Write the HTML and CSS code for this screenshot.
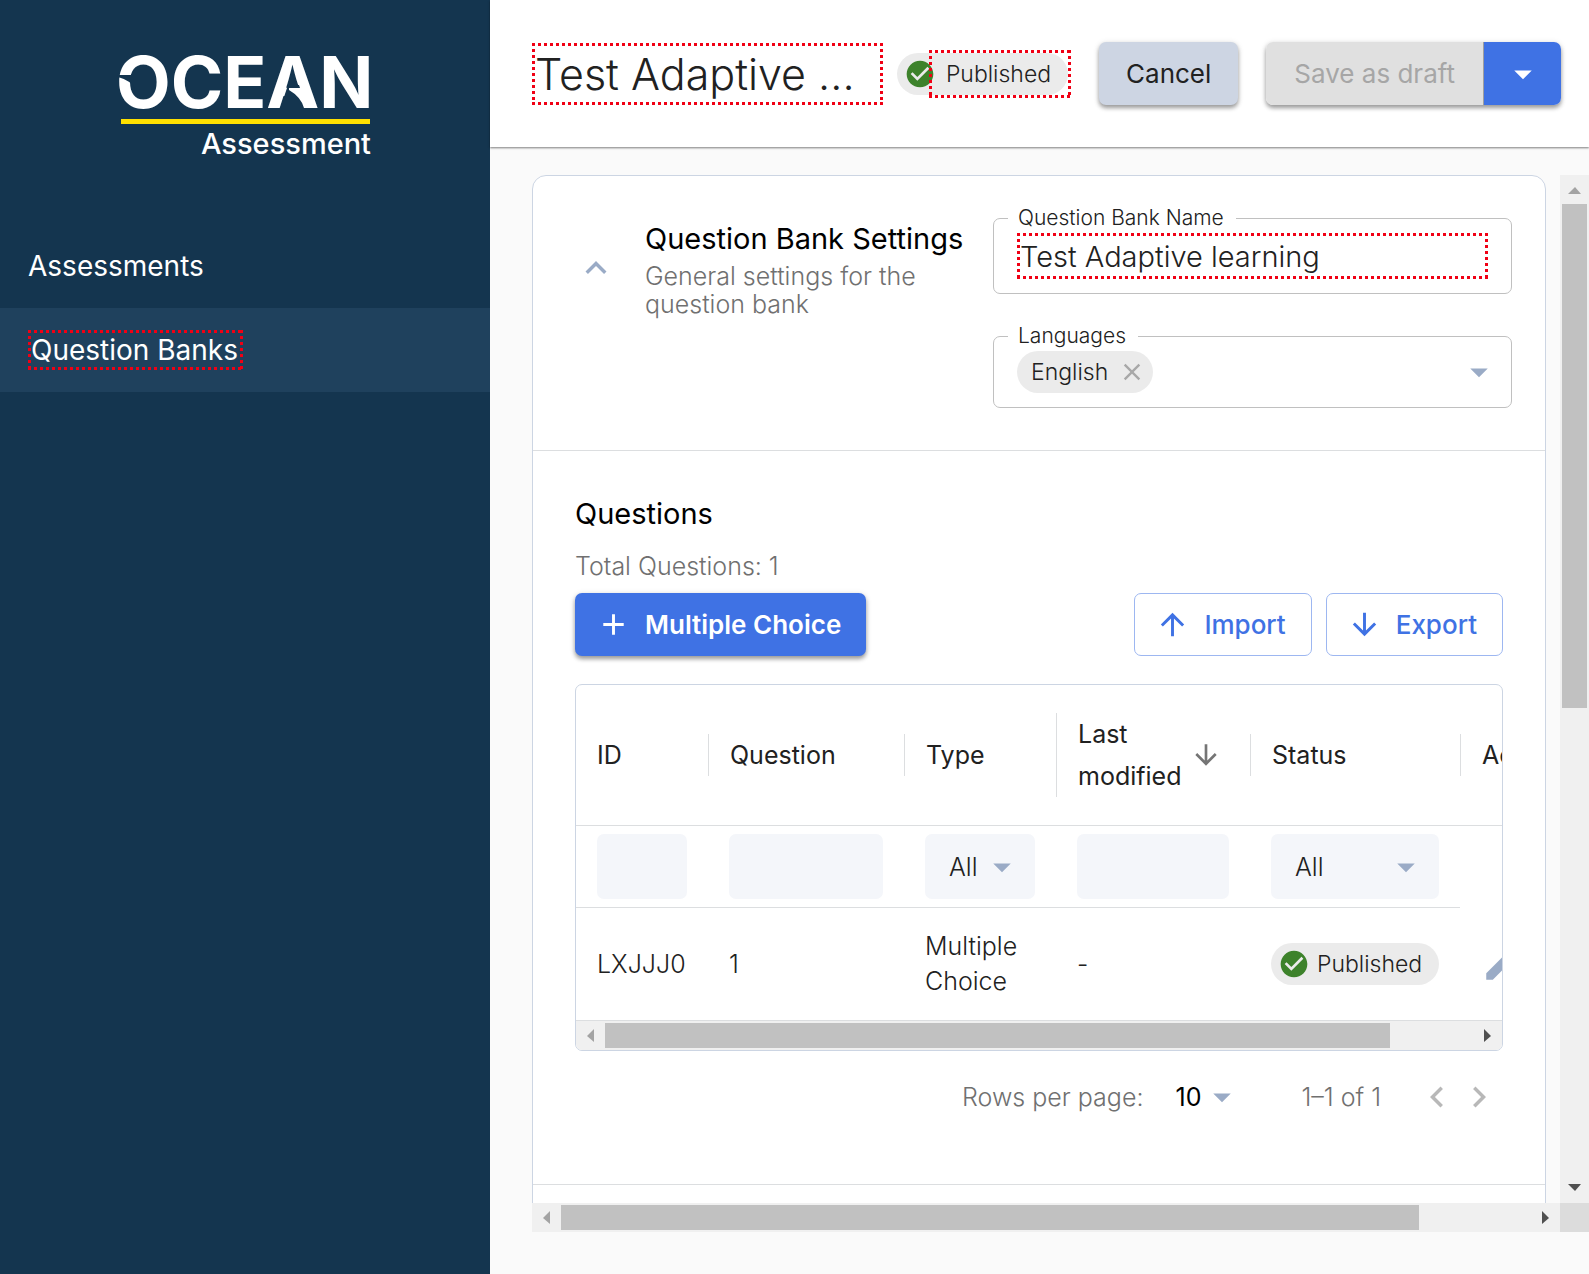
FILE: index.html
```html
<!DOCTYPE html>
<html lang="en">
<head>
<meta charset="utf-8">
<meta name="viewport" content="width=device-width, initial-scale=1">
<title>Question Bank – Ocean Assessment</title>
<link rel="stylesheet" href="styles.css">
</head>
<body>
<svg class="sprite" aria-hidden="true">
  <symbol id="caret" viewBox="0 0 24 24"><path d="M7 10l5 5 5-5z"/></symbol>
  <symbol id="check" viewBox="0 0 24 24"><path d="M12 2C6.500 2 2 6.500 2 12s4.500 10 10 10 10-4.500 10-10S17.500 2 12 2zm-2 15l-5-5 1.400-1.400L10 14.200l7.600-7.600L19 8l-9 9z"/></symbol>
  <symbol id="down" viewBox="0 0 24 24"><path d="M20 12l-1.410-1.410L13 16.170V4h-2v12.170l-5.580-5.590L4 12l8 8 8-8z"/></symbol>
  <symbol id="up" viewBox="0 0 24 24"><path d="M4 12l1.410 1.410L11 7.830V20h2V7.830l5.580 5.590L20 12l-8-8-8 8z"/></symbol>
  <symbol id="plus" viewBox="0 0 24 24"><path d="M19 13h-6v6h-2v-6H5v-2h6V5h2v6h6v2z"/></symbol>
  <symbol id="less" viewBox="0 0 24 24"><path d="M12 8l-6 6 1.410 1.410L12 10.830l4.590 4.580L18 14z"/></symbol>
  <symbol id="prev" viewBox="0 0 24 24"><path d="M15.410 7.410L14 6l-6 6 6 6 1.410-1.410L10.830 12z"/></symbol>
  <symbol id="next" viewBox="0 0 24 24"><path d="M10 6L8.590 7.410 13.170 12l-4.580 4.590L10 18l6-6z"/></symbol>
  <symbol id="close" viewBox="0 0 24 24"><path d="M19 6.410L17.590 5 12 10.590 6.410 5 5 6.410 10.590 12 5 17.590 6.410 19 12 13.410 17.590 19 19 17.590 13.410 12z"/></symbol>
  <symbol id="edit" viewBox="0 0 24 24"><path d="M3 17.250V21h3.750L17.810 9.940l-3.750-3.750L3 17.250zM20.710 7.040a1 1 0 0 0 0-1.410l-2.340-2.340a1 1 0 0 0-1.410 0l-1.830 1.830 3.750 3.750 1.830-1.830z"/></symbol>
</svg>

<div class="app">
  <aside class="sidebar">
    <a class="brand" href="#" aria-label="Ocean Assessment">
      <svg class="logo" viewBox="0 0 256 104" role="img">
        <text class="logo-name" x="-1" y="54">OCEAN</text>
        <path class="logo-cut" d="M0 21H18V36Q16 27 1 23Z"/>
        <path class="logo-cut" d="M171 31H182L187 46H166Z"/>
        <path class="logo-fill" d="M172 34H184L191 54H187Q184 43 172 36Z"/>
        <rect class="logo-bar" x="4" y="65" width="249" height="5"/>
        <text class="logo-sub" x="254" y="100" text-anchor="end">Assessment</text>
      </svg>
    </a>
    <nav class="nav">
      <a class="nav-item" href="#">Assessments</a>
      <a class="nav-item active" href="#"><span class="marked">Question Banks</span></a>
    </nav>
  </aside>

  <div class="main">
    <header class="topbar">
      <h1 class="title marked">Test Adaptive ...</h1>
      <span class="chip status-chip"><svg class="chip-icon"><use href="#check"/></svg><span class="chip-text marked">Published</span></span>
      <button class="btn btn-grey" type="button">Cancel</button>
      <div class="btn-group">
        <button class="btn btn-disabled" type="button" disabled>Save as draft</button>
        <button class="btn btn-blue btn-caret" type="button" aria-label="More save options"><svg class="icon-lg"><use href="#caret"/></svg></button>
      </div>
    </header>

    <main class="scroller">
      <div class="viewport">
        <div class="card">
          <section class="settings">
            <button class="icon-btn collapse" type="button" aria-label="Collapse"><svg class="icon-lg"><use href="#less"/></svg></button>
            <div class="settings-text">
              <h2 class="heading">Question Bank Settings</h2>
              <p class="sub">General settings for the question bank</p>
            </div>
            <div class="fields">
              <fieldset class="field">
                <legend><label for="bank-name">Question Bank Name</label></legend>
                <input class="name-input marked" id="bank-name" type="text" value="Test Adaptive learning">
              </fieldset>
              <fieldset class="field">
                <legend>Languages</legend>
                <div class="lang-row">
                  <span class="chip lang-chip">English<button class="icon-btn remove" type="button" aria-label="Remove English"><svg class="icon-sm"><use href="#close"/></svg></button></span>
                  <button class="icon-btn open" type="button" aria-label="Open languages"><svg class="icon-lg"><use href="#caret"/></svg></button>
                </div>
              </fieldset>
            </div>
          </section>

          <section class="questions">
            <h2 class="heading">Questions</h2>
            <p class="total">Total Questions: 1</p>
            <div class="toolbar">
              <button class="btn btn-blue btn-add" type="button"><svg class="icon"><use href="#plus"/></svg>Multiple Choice</button>
              <button class="btn btn-outline" type="button"><svg class="icon"><use href="#up"/></svg>Import</button>
              <button class="btn btn-outline" type="button"><svg class="icon"><use href="#down"/></svg>Export</button>
            </div>

            <div class="table-box">
              <div class="table-clip">
                <table class="grid">
                  <colgroup><col class="c-id"><col class="c-question"><col class="c-type"><col class="c-date"><col class="c-status"><col class="c-actions"></colgroup>
                  <thead>
                    <tr class="head-row">
                      <th scope="col"><span class="th">ID</span></th>
                      <th scope="col"><span class="th">Question</span></th>
                      <th scope="col"><span class="th">Type</span></th>
                      <th scope="col"><span class="th">Last modified<svg class="icon-sort"><use href="#down"/></svg></span></th>
                      <th scope="col"><span class="th">Status</span></th>
                      <th scope="col"><span class="th">Actions</span></th>
                    </tr>
                  </thead>
                  <tbody>
                    <tr class="filter-row">
                      <td><input class="filter" type="text" aria-label="Filter by ID"></td>
                      <td><input class="filter" type="text" aria-label="Filter by question"></td>
                      <td><span class="select"><select class="filter" aria-label="Filter by type"><option>All</option></select><svg class="icon-lg"><use href="#caret"/></svg></span></td>
                      <td><input class="filter" type="text" aria-label="Filter by last modified"></td>
                      <td><span class="select"><select class="filter" aria-label="Filter by status"><option>All</option></select><svg class="icon-lg"><use href="#caret"/></svg></span></td>
                      <td class="blank"></td>
                    </tr>
                    <tr class="data-row">
                      <td>LXJJJ0</td>
                      <td>1</td>
                      <td>Multiple Choice</td>
                      <td>-</td>
                      <td><span class="chip"><svg class="chip-icon"><use href="#check"/></svg><span class="chip-text">Published</span></span></td>
                      <td><button class="icon-btn" type="button" aria-label="Edit"><svg class="icon-lg"><use href="#edit"/></svg></button></td>
                    </tr>
                  </tbody>
                </table>
              </div>
              <div class="bar bar-x" aria-hidden="true"><i class="arrow left"></i><div class="track"><div class="thumb thumb-table"></div></div><i class="arrow right"></i></div>
            </div>

            <div class="pager">
              <label for="rows">Rows per page:</label>
              <span class="select rows"><select id="rows"><option>10</option></select><svg class="icon-lg"><use href="#caret"/></svg></span>
              <span class="range">1–1 of 1</span>
              <button class="icon-btn step" type="button" aria-label="Previous page" disabled><svg class="icon-lg"><use href="#prev"/></svg></button>
              <button class="icon-btn step" type="button" aria-label="Next page" disabled><svg class="icon-lg"><use href="#next"/></svg></button>
            </div>
          </section>
          <section class="next-section"></section>
        </div>
      </div>
      <div class="bar bar-y" aria-hidden="true"><i class="arrow top"></i><div class="track"><div class="thumb thumb-y"></div></div><i class="arrow bottom"></i></div>
      <div class="bar bar-x" aria-hidden="true"><i class="arrow left"></i><div class="track"><div class="thumb thumb-x"></div></div><i class="arrow right"></i></div>
      <div class="corner"></div>
    </main>
  </div>
</div>
</body>
</html>
```

FILE: styles.css
```css
:root {
  --navy: #14354f;
  --blue: #3f72e4;
  --ink: #212121;
  --muted: #707070;
  --slate: #9aabc6;
  --line: #dcdee0;
  --frame: #ccd5e3;
}

* { box-sizing: border-box; }

body {
  margin: 0;
  font-family: Inter, "Liberation Sans", sans-serif;
  font-size: 25px;
  font-weight: 300;
  color: var(--ink);
  background: #fafafa;
}

h1, h2, p { margin: 0; font-weight: inherit; }
button, input, select { font: inherit; color: inherit; margin: 0; }
button { cursor: pointer; border: 0; background: none; padding: 0; }
svg { display: block; fill: currentColor; flex: none; }

.sprite { display: none; }
.icon { width: 35px; height: 35px; }
.icon-lg { width: 42px; height: 42px; }
.icon-sm { width: 28px; height: 28px; }
.icon-sort { width: 32px; height: 32px; color: #757575; }
.icon-btn { display: flex; align-items: center; justify-content: center; color: var(--slate); }

/* square-dotted red frame */
.marked {
  --dots: #f00014 0 3px, transparent 3px 6px;
  background:
    repeating-linear-gradient(90deg, var(--dots)) top / 100% 3px no-repeat,
    repeating-linear-gradient(90deg, var(--dots)) bottom / 100% 3px no-repeat,
    repeating-linear-gradient(var(--dots)) left / 3px 100% no-repeat,
    repeating-linear-gradient(var(--dots)) right / 3px 100% no-repeat;
}

.app { display: flex; height: 100vh; overflow: hidden; }

/* sidebar */
.sidebar { flex: none; width: 490px; background: var(--navy); color: #fff; }
.brand { display: flex; justify-content: center; height: 224px; padding-top: 54px; color: #fff; }
.logo { width: 256px; height: 104px; overflow: visible; }
.logo-name { font-size: 71px; font-weight: 700; }
.logo-sub { font-size: 29px; font-weight: 500; }
.logo-cut { fill: var(--navy); }
.logo-bar { fill: #ffe000; }
.nav-item {
  display: flex;
  align-items: center;
  height: 84px;
  padding: 0 28px;
  font-size: 28px;
  font-weight: 400;
  color: #fff;
  text-decoration: none;
}
.nav-item.active { background: #1f415d; }
.nav-item .marked { padding: 0 5px 0 3px; line-height: 40px; }

/* top bar */
.main { flex: 1; min-width: 0; display: flex; flex-direction: column; }
.topbar {
  flex: none;
  display: flex;
  align-items: center;
  height: 147px;
  padding: 0 28px 0 42px;
  background: #fff;
  box-shadow: 0 1px 2px rgba(0, 0, 0, .5);
}
.title {
  flex: 1;
  min-width: 0;
  margin-right: 14px;
  padding: 0 3px;
  font-size: 43px;
  line-height: 62px;
  white-space: nowrap;
  overflow: hidden;
}
.chip {
  display: inline-flex;
  align-items: center;
  height: 42px;
  border-radius: 21px;
  background: #ebebeb;
  font-size: 23px;
  vertical-align: middle;
}
.chip-icon { width: 32px; height: 32px; margin-left: 7px; color: #3d822b; }
.chip-text { padding: 0 17px 0 7px; line-height: 42px; }
.status-chip { margin-right: 31px; }
.status-chip .chip-icon { margin-right: -7px; }
.status-chip .chip-text { margin-right: -3px; padding: 0 20px 0 17px; line-height: 48px; }

.btn {
  display: flex;
  align-items: center;
  justify-content: center;
  height: 63px;
  padding: 0 28px;
  border-radius: 7px;
  font-size: 26px;
  font-weight: 400;
  white-space: nowrap;
}
.btn-grey, .btn-group, .btn-add { box-shadow: 0 3px 4px rgba(0, 0, 0, .35), 0 1px 6px rgba(0, 0, 0, .12); }
.btn-grey { background: #cdd5e3; margin-right: 28px; padding: 0 27px; }
.btn-group { display: flex; border-radius: 7px; }
.btn-disabled { background: #e0e0e0; color: #a6a6a6; border-right: 1px solid #9f9f9f; border-radius: 7px 0 0 7px; }
.btn-blue { background: var(--blue); color: #fff; }
.btn-caret { width: 77px; border-radius: 0 7px 7px 0; }
.btn-add { font-weight: 600; gap: 14px; margin-right: auto; padding: 0 25px 0 21px; }
.btn-outline { border: 1px solid #9db7f1; color: var(--blue); font-weight: 500; padding: 0 25px 0 20px; gap: 14px; }

/* scrolling area */
.scroller {
  flex: 1;
  min-height: 0;
  display: grid;
  grid-template: minmax(0, 1fr) 29px / minmax(0, 1fr) 29px;
  margin: 28px 0 42px 42px;
}
.viewport { overflow: hidden; padding-right: 14px; }
.card { border: 1px solid var(--frame); border-radius: 14px; background: #fff; }

.bar { display: flex; align-items: center; background: #f0f0f0; }
.bar-x { height: 29px; }
.bar-y { width: 29px; flex-direction: column; }
.track { flex: 1; min-width: 0; }
.thumb { background: #c1c1c1; }
.bar-x .thumb { height: 25px; }
.bar-y .thumb { width: 25px; }
.thumb-x { width: 88.5%; }
.thumb-table { width: 90.4%; }
.thumb-y { height: 52%; }
.bar-y .track { min-height: 0; }
.arrow { flex: none; width: 29px; height: 29px; background: #505050; }
.left { background: #a3a3a3; clip-path: polygon(11px 15px, 18px 8px, 18px 21px); }
.right { clip-path: polygon(11px 8px, 18px 15px, 11px 21px); }
.top { background: #a3a3a3; clip-path: polygon(8px 19px, 21px 19px, 15px 12px); }
.bottom { clip-path: polygon(8px 10px, 21px 10px, 15px 17px); }
.corner { background: #dcdcdc; }

/* settings */
.settings {
  display: grid;
  grid-template-columns: 42px 320fr 519fr;
  column-gap: 28px;
  height: 275px;
  padding: 28px 33px 0 42px;
  border-bottom: 1px solid var(--line);
}
.collapse { align-self: start; width: 42px; height: 42px; margin-top: 43px; }
.settings-text { padding-top: 14px; }
.heading { font-size: 29px; line-height: 42px; font-weight: 400; color: #000; white-space: nowrap; }
.sub { line-height: 28px; margin-top: 2px; color: var(--muted); }
.fields { display: flex; flex-direction: column; gap: 28px; }
.field {
  min-width: 0;
  margin: 0;
  padding: 1px 23px 14px;
  border: 1px solid #c0c0c0;
  border-radius: 7px;
}
.field legend { margin-left: -9px; padding: 0 12px 0 10px; font-size: 21px; line-height: 28px; }
.name-input { display: block; width: 100%; height: 46px; padding: 0 3px; border: 0; outline: 0; font-size: 29px; }
.lang-row { display: flex; align-items: center; justify-content: space-between; height: 42px; }
.lang-chip { padding: 0 7px 0 14px; }
.remove { margin-left: 10px; color: #a8a8a8; }
.open { margin-right: -12px; }

/* questions */
.questions { padding: 42px; border-bottom: 1px solid var(--line); }
.total { margin-top: 14px; line-height: 35px; color: var(--muted); }
.toolbar { display: flex; gap: 14px; margin: 9px 0 28px; }
.table-box { border: 1px solid var(--frame); border-radius: 7px; overflow: hidden; }
.table-clip { overflow: hidden; }
.grid { table-layout: fixed; width: 1080px; border-collapse: separate; border-spacing: 0; }
.c-id { width: 132px; }
.c-question { width: 196px; }
.c-type { width: 152px; }
.c-date { width: 194px; }
.c-status { width: 210px; }
.grid th, .grid td { padding: 0 21px; text-align: left; border-bottom: 1px solid var(--line); }
.head-row { height: 141px; }
.grid th { padding: 0; font-weight: 400; line-height: 42px; }
.th { display: flex; align-items: center; justify-content: space-between; padding: 0 28px 0 21px; border-left: 1px solid var(--line); }
.head-row th:first-child .th { border-left-color: transparent; padding-left: 20px; }
.filter-row { height: 82px; }
.grid .blank { border-bottom: 0; }
.filter { display: block; width: 100%; height: 65px; padding: 0 24px; border: 0; border-radius: 7px; background: #f4f6fa; appearance: none; }
.select { display: block; position: relative; }
.select svg { position: absolute; right: 12px; top: 50%; margin-top: -21px; color: var(--slate); pointer-events: none; }
.data-row { height: 113px; line-height: 35px; }

.pager { display: flex; align-items: center; justify-content: flex-end; height: 91px; padding-right: 3px; color: var(--muted); }
.rows { margin: 0 58px 0 28px; color: #000; font-weight: 400; }
.rows select { display: block; width: 72px; height: 42px; padding: 0 4px; border: 0; background: none; appearance: none; }
.rows svg { right: 0; }
.range { margin-right: 35px; }
.step { color: #b8b8b8; }
.next-section { height: 200px; }
```
